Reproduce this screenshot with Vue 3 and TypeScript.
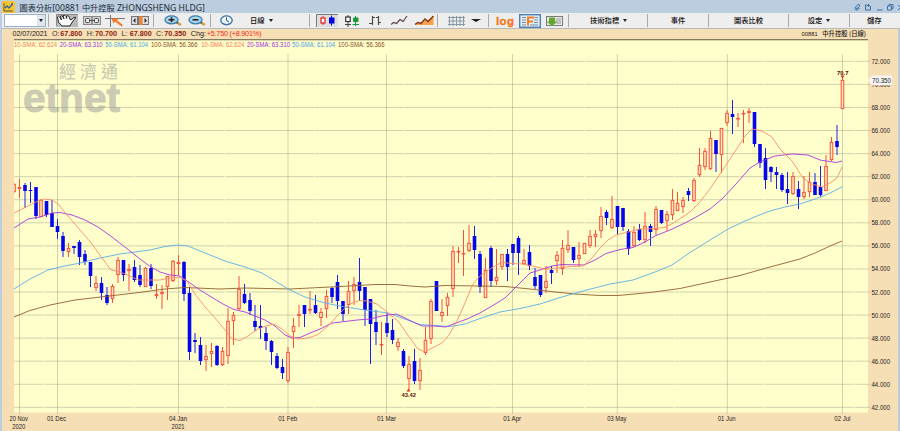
<script setup lang="ts">
type Candle = [number, number, number, number, 0 | 1]

// high, body top, body bottom, low, rising (1) or falling (0)
const raw: Candle[] = [
  [183,184,192,193,1],[179,187,189,198,1],[183,185,191,208,0],[182,190,191,203,0],[187,187,216,219,0],[199,200,217,217,1],[201,201,215,217,0],[200,213,227,227,0],
  [219,226,232,239,0],[232,236,251,257,0],[243,248,252,257,1],[246,246,248,254,0],[240,242,257,265,0],[250,254,262,265,0],[262,262,276,287,0],[276,283,288,291,1],
  [277,283,293,300,0],[287,295,303,305,0],[284,286,299,303,1],[257,260,275,283,1],[260,260,275,281,0],[264,269,271,291,1],[260,267,280,282,0],[265,275,285,287,0],
  [267,268,287,287,1],[264,268,286,289,0],[284,294,296,299,1],[285,292,294,309,1],[276,276,287,300,1],[260,261,281,282,1],[255,262,264,275,1],[261,262,294,301,0],
  [287,293,352,360,0],[333,340,342,353,0],[337,345,361,365,0],[345,356,360,371,1],[343,351,354,367,1],[345,346,365,366,0],[347,351,365,366,1],[308,321,356,364,1],
  [312,315,321,345,1],[276,289,309,310,1],[284,294,303,304,0],[293,300,311,315,0],[305,321,327,331,0],[305,326,328,339,0],[327,333,341,350,0],[340,341,352,365,0],
  [353,356,368,369,0],[359,367,373,379,0],[347,352,381,383,1],[318,326,332,348,1],[305,314,316,327,1],[305,305,314,327,0],[291,309,310,314,1],[295,305,313,314,0],
  [308,312,318,326,1],[290,296,309,318,1],[287,288,297,303,0],[275,282,301,309,0],[301,301,314,321,0],[281,291,305,314,1],[277,284,291,305,1],[258,282,291,301,0],
  [287,287,310,326,0],[299,299,324,364,0],[310,322,332,345,0],[322,344,345,355,1],[313,323,333,337,0],[319,330,340,344,0],[338,342,347,351,1],[349,351,366,368,0],
  [356,364,379,389,1],[349,361,381,384,0],[358,370,381,390,1],[327,340,353,355,1],[299,301,339,344,1],[281,281,311,311,0],[299,312,316,322,1],[293,297,306,316,1],
  [246,251,289,297,1],[247,251,252,263,1],[230,253,254,276,1],[225,243,251,252,1],[226,236,250,259,0],[251,254,287,293,0],[258,270,298,298,1],[246,248,281,287,0],
  [249,277,281,285,1],[254,254,267,270,1],[249,254,267,281,0],[244,244,253,265,0],[236,238,253,275,0],[249,260,264,265,1],[245,252,266,270,0],[268,277,286,289,0],
  [275,275,295,297,0],[266,281,288,293,1],[266,270,273,284,0],[251,255,261,273,1],[240,248,269,275,1],[230,245,250,253,1],[247,247,260,263,0],[242,255,259,267,1],
  [243,243,254,254,1],[230,236,246,248,1],[230,234,237,247,1],[207,216,231,238,1],[210,212,218,225,0],[196,219,228,229,1],[206,206,227,234,0],[208,208,227,231,0],
  [229,231,249,255,0],[226,232,246,247,1],[224,229,240,241,0],[212,226,240,243,1],[224,226,232,246,0],[206,209,230,235,1],[210,210,223,224,0],[211,214,221,231,1],
  [189,200,215,220,1],[192,203,211,211,1],[197,200,207,213,1],[188,191,195,201,0],[178,180,201,202,1],[148,165,175,177,1],[148,151,167,170,1],[131,138,169,170,1],
  [140,140,154,172,0],[128,128,155,173,1],[110,113,123,126,1],[100,114,117,134,0],[113,118,119,127,1],[110,113,114,143,1],[108,111,113,123,1],[112,112,144,147,0],
  [144,144,163,168,0],[148,158,180,189,0],[166,167,172,182,0],[167,172,175,189,0],[173,175,190,192,0],[172,189,193,204,0],[172,176,194,195,1],[181,189,197,209,0],
  [176,192,197,199,1],[172,182,192,197,1],[173,182,195,195,0],[166,187,195,197,0],[155,166,191,191,1],[137,142,160,161,1],[125,141,147,155,0],[76,80,109,109,1],
]
const candles = raw.map(([high, top, bottom, low, up], k) => ({
  x: Math.round((19.3 + 5.487 * (k - 1)) * 2) / 2, high, top, bottom, low, up: up === 1,
}))

const averages = [
  { name: 'brown', pts: '14,317 30,310.500 50,305 75,300 105,296.500 135,293 150,291 165,289 185,287.500 220,289 245,288 290,289 320,287.500 350,286 375,284.500 395,284.500 410,286 425,287 445,285.500 480,286 505,286.500 530,289 555,292 575,294 600,295.500 618,295.500 650,292.500 680,288.500 710,282 740,275.500 770,267 800,259 815,253 830,246 842,241' },
  { name: 'sky', pts: '14,289 30,279 48,270 60,267 80,263 100,258 120,254 150,250 165,246.500 178,245 188,246 205,253 225,261 245,267 262,273 275,281 290,290 305,297 325,303 345,307 365,310 388,313 402,318 420,324.500 450,326.500 465,324 480,318.500 500,312 520,308.500 540,304 560,297.500 583,291 610,284 633,280 655,272 672,265 690,252.500 710,240 728,229 745,221 757,216 770,211 785,207 800,204 815,199 830,193 842,187' },
  { name: 'violet', pts: '14,228 28,219 40,217 52,213 60,212.500 72,215 84,219.500 98,227 112,237 130,251 140,259 150,266.500 160,272 170,275 180,276 190,283 200,290 213,298 223,304 234,309.500 245,312 255,316 265,320 275,326 285,335 292,338 300,337.500 310,333 320,329 332,323 345,321.500 357,320 370,319 382,316 396,314 403,317 412,321.500 422,326 434,326 446,327 456,323 467,319 480,313 492,306 505,298 515,288 530,273 540,270 552,266 562,264.500 584,265 595,260 606,253.500 620,249.500 633,247.500 645,242 655,236 670,230 685,223 698,216 710,209 722,199 736,184 750,168 760,162 775,156 792,154 808,155 820,160 836,162.500 842,161' },
  { name: 'coral', pts: '14,213 30,205 36,202 44,199 52,200 58,204 68,216 80,230 92,244 102,258 111,270 120,272 130,276 138,280 150,280 160,280 170,278 180,277.500 187,281 195,294 205,307 215,318 225,330 232,339 240,340.500 248,336 258,329 266,326 274,324 282,329 290,336 298,339 308,338 318,334.500 328,326 336,317 345,308 352,303 360,300.500 367,301 377,304 387,312 398,321 410,338 418,349 425,352 432,348 442,343 449,335 457,321 465,303 473,284 480,276 490,269 502,262 510,263.500 522,264 533,266 545,269 558,268 570,266.500 583,266 592,258 600,248 608,240 616,235 628,232 640,229 655,228.500 665,227.500 675,222 690,212 700,202 712,186 724,168 736,150 745,136 752,129 762,131 772,137 780,149 792,161 803,178 812,184 822,187 830,183 837,178 842,167' },
]

const prices = Array.from({ length: 16 }, (_, k) => ({ y: 61.3 + k * 23.07, label: (72 - 2 * k).toFixed(3) }))
const dates = [
  { x: 19.5, tx: 18.7, label: '20 Nov', w: 18.5, year: '2020' }, { x: 57.5, tx: 56.5, label: '01 Dec', w: 19 },
  { x: 178.5, tx: 178, label: '04 Jan', w: 18, year: '2021' }, { x: 288, tx: 287.7, label: '01 Feb', w: 19 },
  { x: 386.5, tx: 386.5, label: '01 Mar', w: 19 }, { x: 512.5, tx: 512.2, label: '01 Apr', w: 18 },
  { x: 617.3, tx: 616.8, label: '03 May', w: 19 }, { x: 727.3, tx: 726.7, label: '01 Jun', w: 18 },
  { x: 842.5, tx: 842.3, label: '02 Jul', w: 16 },
]
const smas = [
  { x: 14, text: '10-SMA: 62.624', w: 43, c: 'coral' }, { x: 59.7, text: '20-SMA: 63.310', w: 43, c: 'violet' },
  { x: 105.3, text: '50-SMA: 61.104', w: 42.7, c: 'sky' }, { x: 151, text: '100-SMA: 56.366', w: 46.5, c: 'brown' },
  { x: 201.3, text: '10-SMA: 62.624', w: 43, c: 'coral' }, { x: 247, text: '20-SMA: 63.310', w: 43, c: 'violet' },
  { x: 292.3, text: '50-SMA: 61.104', w: 42.7, c: 'sky' }, { x: 338, text: '100-SMA: 56.366', w: 46.5, c: 'brown' },
]
const quotes = [
  { k: 'O:', v: '67.800' }, { k: 'H:', v: '70.700' }, { k: 'L:', v: '67.800' }, { k: 'C:', v: '70.350' },
]
const breaks = Array.from({ length: 10 }, (_, k) => 44.5 + k * 90)
</script>

<template>
  <div class="window">
    <header class="titlebar">
      <svg class="logo" width="13" height="12" viewBox="0 0 13 12">
        <rect width="13" height="12" rx="1.500" fill="#f9c32b" />
        <path d="M2 2v8h9" stroke="#4c5a55" fill="none" />
        <path d="M3 7l2-2 2 2 3.500-4" stroke="#2b62a0" stroke-width="1.300" fill="none" />
        <path d="M9 2h2v2z" fill="#2b62a0" />
      </svg>
      <span class="title"><span class="han">圖表分析</span>[00881 <span class="han">中升控股</span> ZHONGSHENG HLDG]</span>
      <svg class="controls" width="46" height="9" viewBox="0 0 46 9" fill="none" stroke="#3e6fa5">
        <path d="M2 7Q0 5 2 3.500L4 1.500Q6 1 5.500 3L3 6Q2 6 3 4.500M2 7Q4 7.500 5.500 5" />
        <path d="M13 2h-1.500v5h5V3M13 2.500h3M14.500 1v3" />
        <path d="M23 7h5.500" />
        <path d="M33.500 3h4v4h-4zM35 3V1.500h4v4h-1.500" />
        <path d="M44 2l5 5M44 7l3-3" />
      </svg>
    </header>

    <nav class="toolbar">
      <div class="group g-combo">
        <div class="combo"><span class="field"></span><span class="drop"><i class="tri"></i></span></div>
      </div>
      <div class="group g-tools">
        <svg class="hand" width="22" height="13" viewBox="0 0 22 13">
          <rect width="22" height="13" fill="#b9b9b9" /><path d="M.5 12V.5H22" fill="none" stroke="#888" />
          <path d="M6 12L2.500 8 1.500 3q1-1.500 2 0l2 3-1-4q1.500-1 2.500 1l1 2-1-3.500q2-1 3 1l.7 2L10.500 2q2-1 2.700 1l.8 2.500q1 1 2-.5l2-1.500q2.500-1 1.500.5L17 7l-2 3-1 2z" fill="#fff" stroke="#262626" />
        </svg>
        <svg class="ml5" width="18" height="9" viewBox="0 0 18 9">
          <rect x=".5" y=".5" width="17" height="8" fill="#d4d4d4" stroke="#888" />
          <rect x="2.500" y="2.500" width="4" height="4" rx="1" fill="#eee" stroke="#444" /><rect x="11.500" y="2.500" width="4" height="4" rx="1" fill="#eee" stroke="#444" /><path d="M7 4.500h4M9 1v7" stroke="#555" />
        </svg>
        <svg class="ml4" width="20" height="12" viewBox="0 0 20 12">
          <path d="M0 3.500h20M5.500 0v12" stroke="#777" /><path d="M6.500 3.500h7.500l-2 1.700 6 4.800-1.500 1.500-6.500-5-1.500 2z" fill="#f37a2c" />
        </svg>
        <svg class="ml6" width="18" height="9" viewBox="0 0 18 9">
          <rect x=".5" y=".5" width="17" height="8" fill="#ddd" stroke="#777" /><path d="M6 1h2.500v7H6z" fill="#777" /><path d="M8.500 0h3v9h-3z" fill="#f0812c" /><path d="M4.500 2v5L2 4.500zM13.500 2v5L16 4.500z" fill="#333" />
        </svg>
      </div>
      <div class="group g-zoom">
        <svg v-for="z in 2" :key="z" class="zoom" width="18" height="11" viewBox="0 0 18 11">
          <path d="M12 7l5 3" stroke="#e09a3c" stroke-width="2.500" /><path d="M12 7l2 1.200" stroke="#52657a" stroke-width="2" />
          <ellipse cx="7.500" cy="4.800" rx="6.500" ry="4" fill="#a9d4ec" stroke="#3b7cad" stroke-width="1.300" />
          <path :d="z === 1 ? 'M4.500 4.800h6M7.500 2.300v5' : 'M4.500 4.800h6'" stroke="#222" stroke-width="1.600" />
        </svg>
      </div>
      <div class="group g-period">
        <svg width="13" height="11" viewBox="0 0 13 11"><ellipse cx="6.500" cy="5.300" rx="5.700" ry="4.400" fill="#edf7ff" stroke="#4474a5" stroke-width="1.400" /><path d="M6.500 2.500v3L9 7" fill="none" stroke="#356" /></svg>
        <span class="han period">日線</span><i class="tri"></i>
      </div>
      <div class="group g-style">
        <svg width="22" height="13" viewBox="0 0 22 13">
          <rect width="22" height="13" fill="#dedede" /><path d="M.5 13V.5H22" stroke="#777" fill="none" />
          <path d="M7 2v9" stroke="#d33" /><rect x="5" y="4" width="4" height="5" fill="#fff" stroke="#e01c1c" stroke-width="1.200" /><path d="M15.500 1.500v10" stroke="#00d" /><rect x="13" y="3.500" width="5.500" height="6" fill="#00d" />
        </svg>
        <svg class="ml6" width="16" height="12" viewBox="0 0 16 12"><path d="M4 0v12M1 9.500h6" stroke="#444" /><rect x="1.700" y="2" width="4.500" height="4.500" fill="#fff" stroke="#333" stroke-width="1.200" /><path d="M11.500 1v10M8.500 9.500h6.500" stroke="#194" /><rect x="9" y="2.500" width="5.500" height="4.500" rx="1" fill="#169b35" /></svg>
        <svg class="ml8" width="14" height="11" viewBox="0 0 14 11"><path d="M4.500 1v9M1 8.500h3.500M4.500 2.500H7M10.500 1v9M8 2.500h2.500M10.500 7.500H13" stroke="#514b46" stroke-width="1.200" /></svg>
        <svg class="ml9" width="17" height="11" viewBox="0 0 17 11"><path d="M0 9.500l2.500-2 3 1 3.500-4 3 2 4-5.500" stroke="#5b4545" stroke-width="1.200" fill="none" /></svg>
        <svg class="ml7" width="20" height="11" viewBox="0 0 20 11"><path d="M0 10l3-2 3 1 4-4 3 2 5.500-6V10z" fill="#f5a04a" /><path d="M0 9.500l3-2 3 1 4-4.500 3 2.500L18.500 1" stroke="#8a3413" stroke-width="1.500" fill="none" /></svg>
      </div>
      <div class="group g-grid">
        <svg width="17" height="10" viewBox="0 0 17 10"><path d="M1.500 0v10M5 0v10M8.500 0v10M12 0v10M15.500 0v10M0 1.500h17M0 5h17M0 8.500h17" stroke="#8799a3" /></svg>
        <i class="tri wide"></i>
      </div>
      <div class="group g-log">
        <b class="log">log</b>
        <svg class="ml3" width="22" height="14" viewBox="0 0 22 14"><rect x=".7" y=".7" width="20.600" height="12.600" fill="#e3edf5" stroke="#4a80b5" stroke-width="1.400" /><path d="M3 3.500h4M3 6h4M3 8.500h4M3 11h4M16 3.500h3M15 6h4M15 8.500h4M11 11h8" stroke="#5a738b" stroke-width=".8" /><path d="M9 11.500V3.500h6.500M9 7.500h5" stroke="#f57e22" stroke-width="2" fill="none" /></svg>
        <svg class="ml5" width="17" height="12" viewBox="0 0 17 12"><rect x=".5" y="1.500" width="16" height="9" fill="#e9e9e9" stroke="#7b7b7b" /><path d="M10 4h5M10 6h5M10 8h5" stroke="#999" /><path d="M3 2.500h6v4h2.500L6 11 .500 6.500H3z" fill="#65a62c" /></svg>
      </div>
      <div class="group g-ind han">技術指標<i class="tri"></i></div>
      <div class="group g-event han">事件</div>
      <div class="group g-comp han">圖表比較</div>
      <div class="group g-set han">設定<i class="tri"></i></div>
      <div class="group g-save han">儲存</div>
    </nav>

    <main class="panel">
      <section class="quote">
        <span class="date">02/07/2021</span>
        <span v-for="q in quotes" :key="q.k" class="pair"><span class="key">{{ q.k }}</span><b>{{ q.v }}</b></span>
        <span class="chg">Chg:</span><span class="delta">+5.750 (+8.901%)</span>
        <span class="symbol">00881 <span class="han">中升控股 (日線)</span></span>
      </section>

      <svg class="chart" width="896" height="392" viewBox="2 39 896 392">
        <rect x="14" y="39" width="854" height="373.500" fill="#ffffcc" />
        <rect x="14" y="39" width="854" height="1.300" fill="#857a62" />
        <g class="mark">
          <text x="59" y="78" font-size="17" textLength="59">經濟通</text>
          <text x="23" y="112" font-size="41" class="brand" textLength="97" lengthAdjust="spacingAndGlyphs">etnet</text>
        </g>
        <g class="grid">
          <line v-for="p in prices" :key="p.label" x1="14" x2="870" :y1="p.y" :y2="p.y" />
          <line v-for="d in dates" :key="d.label" :x1="d.x" :x2="d.x" y1="54" y2="414" />
        </g>
        <g fill="#ffffcc">
          <template v-for="b in breaks" :key="b"><rect v-for="p in prices" :key="p.label" :x="b - .4" :y="p.y - 1" width=".8" height="2" /></template>
        </g>
        <g v-for="(c, k) in candles" :key="k" :class="c.up ? 'up' : 'down'">
          <line :x1="c.x" :x2="c.x" :y1="c.high" :y2="c.up ? c.top : c.low" />
          <line v-if="c.up" :x1="c.x" :x2="c.x" :y1="c.bottom" :y2="c.low" />
          <rect :x="c.x - (c.up ? 1.3 : 1.800)" :y="c.top + (c.up ? .4 : 0)" :width="c.up ? 2.6 : 3.600" :height="Math.max(c.bottom - c.top - (c.up ? .8 : 0), .6)" />
        </g>
        <rect x="2" y="170" width="12" height="40" fill="#f7dfb5" />
        <polyline v-for="a in averages" :key="a.name" :class="['avg', a.name]" :points="a.pts" />
        <g class="small">
          <text v-for="s in smas" :key="s.x" :x="s.x" y="46.500" :textLength="s.w" :class="s.c" lengthAdjust="spacingAndGlyphs">{{ s.text }}</text>
          <text v-for="p in prices" :key="p.label" x="871.500" :y="p.label === '70.000' ? 87 : p.y + 2.500" textLength="18.500" lengthAdjust="spacingAndGlyphs">{{ p.label }}</text>
          <template v-for="d in dates" :key="d.label">
            <text :x="d.tx - d.w / 2" y="420.500" :textLength="d.w" lengthAdjust="spacingAndGlyphs">{{ d.label }}</text>
            <text v-if="d.year" :x="d.tx - 6.500" y="428.500" textLength="13" lengthAdjust="spacingAndGlyphs">{{ d.year }}</text>
          </template>
        </g>
        <path d="M868 80.500l4-5h20v9.500h-20z" fill="#f8f7f5" />
        <text class="small" x="872" y="83" textLength="19" lengthAdjust="spacingAndGlyphs">70.350</text>
        <g class="peak">
          <text x="837" y="74.500" textLength="11.500" lengthAdjust="spacingAndGlyphs">70.7</text>
          <path d="M840.500 75.500h4l-2 3z" />
          <path d="M406.500 391.500h4l-2-3z" />
          <text x="401.500" y="397.300" textLength="14.500" lengthAdjust="spacingAndGlyphs">43.42</text>
        </g>
      </svg>
    </main>
  </div>
</template>

<style>
body { margin: 0; overflow: hidden; }
</style>

<style scoped>
.window { width: 900px; height: 431px; box-sizing: border-box; background: #bbcddf; font-family: "Liberation Sans", "Noto Sans CJK TC", sans-serif; color: #222; display: flex; flex-direction: column; overflow: hidden; }
.han { font-family: "Noto Sans CJK TC", sans-serif; }
.titlebar { height: 13px; flex: none; display: flex; align-items: center; padding-left: 2px; }
.logo { flex: none; }
.title { margin-left: 4.500px; font: 8.600px/13px "Noto Sans", "Noto Sans CJK TC", sans-serif; white-space: pre; color: #222a35; padding-top: 2px; }
.title .han { font-size: 8.200px; }
.controls { margin-left: auto; margin-top: 1px; }
.toolbar { height: 15px; flex: none; margin-left: 2px; display: flex; background: #eeeeee; border-bottom: 1px solid #b7babd; }
.group { box-sizing: border-box; display: flex; align-items: center; flex: none; font-size: 7.300px; font-weight: 500; line-height: 13px; white-space: nowrap; color: #111; border-right: 1px solid #b5b5b5; border-image: linear-gradient(transparent 10%, #aaa 10% 85%, transparent 85%) 1; }
.group svg { flex: none; }
.g-combo { width: 47px; padding-left: 2px; }
.combo { width: 42px; height: 13px; box-sizing: border-box; border: 1px solid #9db1c8; background: #fff; display: flex; }
.field { flex: 1; }
.drop { width: 8px; background: #dfe5ec; display: flex; align-items: center; justify-content: center; }
.tri { border: 2.500px solid transparent; border-top: 3px solid #222; border-bottom: 0; margin-left: 4px; }
.drop .tri { margin: 0; }
.g-tools { width: 105px; padding-left: 7px; }
.g-zoom { width: 57px; padding-left: 10px; gap: 6px; }
.g-period { width: 99px; padding-left: 9px; }
.period { margin-left: 17px; }
.g-style { width: 128px; padding-left: 6px; }
.g-grid { width: 51px; padding-left: 10px; }
.tri.wide { border-left-width: 5px; border-right-width: 5px; border-top-width: 3.500px; margin-left: 6px; }
.g-log { width: 80px; padding-left: 7px; }
.log { width: 20px; font-size: 11.500px; color: #f5781a; -webkit-text-stroke: .3px #f5781a; letter-spacing: .4px; line-height: 12px; }
.g-ind { width: 79px; padding-left: 21px; }
.g-event { width: 61px; justify-content: center; }
.g-comp { width: 80px; justify-content: center; }
.g-set { width: 61px; justify-content: center; }
.g-save { flex: 1; padding-left: 17px; border-right: 0; border-image: none; }
.ml3 { margin-left: 3px; } .ml4 { margin-left: 4px; } .ml5 { margin-left: 5px; } .ml6 { margin-left: 6px; } .ml7 { margin-left: 7px; } .ml8 { margin-left: 8px; } .ml9 { margin-left: 9px; }
.panel { flex: 1; margin: 0 2px; background: #f7dfb5; display: flex; flex-direction: column; }
.quote { height: 10px; flex: none; display: flex; align-items: center; padding: 0 32px 0 10.500px; font-size: 7.200px; line-height: 10px; white-space: pre; }
.date { width: 39.500px; letter-spacing: -.1px; }
.pair { width: 34.700px; display: flex; color: #333; }
.key { width: 8.300px; }
.pair b { color: #8c1a10; }
.chg { width: 16px; }
.delta { color: #f02818; letter-spacing: -.2px; }
.symbol { margin-left: auto; font-size: 5.800px; }
.symbol .han { margin-left: 3px; font-size: 6.300px; font-weight: 500; }
.chart { display: block; flex: none; }
.mark { fill: #ccccb2; font-family: "Liberation Sans", "Noto Sans CJK TC", sans-serif; font-weight: 500; }
.brand { font-weight: 700; stroke: #ccccb2; stroke-width: 1px; }
.grid line { stroke: #8c9280; stroke-opacity: .5; stroke-width: .8px; }
.up line, .up rect { stroke: #f8503c; stroke-width: 1px; fill: none; }
.up rect { fill: #ffe6ba; }
.down line { stroke: #2020ee; stroke-width: 1px; }
.down rect { fill: #0606ea; }
.avg { fill: none; stroke-width: .9px; }
polyline.coral { stroke: #f98e68; } polyline.violet { stroke: #aa35df; } polyline.sky { stroke: #5caee8; } polyline.brown { stroke: #946030; }
.small { font-size: 7px; fill: #222; }
text.coral { fill: #f9785c; } text.violet { fill: #a22be0; } text.sky { fill: #48a0e4; } text.brown { fill: #8b4d22; }
.peak { font-size: 6.200px; font-weight: 700; fill: #5e0d05; }
.peak path { fill: #d62d20; }
</style>
